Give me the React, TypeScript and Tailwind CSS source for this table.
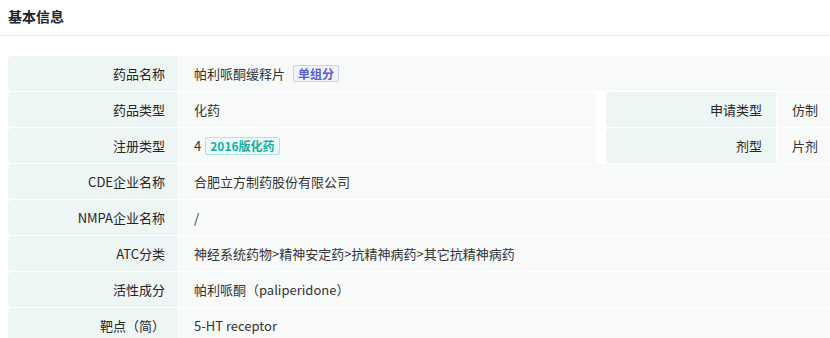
import type { ReactNode } from 'react';

type Row = { label: string; value: ReactNode; extra?: { label: string; value: string } };

const rows: Row[] = [
  {
    label: '药品名称',
    value: (
      <>
        帕利哌酮缓释片
        <span className="ml-[8px] inline-flex h-[17px] items-center rounded-[2px] border border-[#cfd0f2] bg-[#f1f1fc] px-[4px] text-[12px] font-semibold text-[#5b5fc7]">
          单组分
        </span>
      </>
    ),
  },
  { label: '药品类型', value: '化药', extra: { label: '申请类型', value: '仿制' } },
  {
    label: '注册类型',
    value: (
      <>
        4
        <span className="ml-[4px] inline-flex h-[18px] items-center rounded-[2px] border border-[#ace7e0] bg-[#ebfaf8] px-[4px] text-[12px] font-semibold text-[#16b0a1]">
          2016版化药
        </span>
      </>
    ),
    extra: { label: '剂型', value: '片剂' },
  },
  { label: 'CDE企业名称', value: '合肥立方制药股份有限公司' },
  { label: 'NMPA企业名称', value: '/' },
  { label: 'ATC分类', value: '神经系统药物>精神安定药>抗精神病药>其它抗精神病药' },
  { label: '活性成分', value: '帕利哌酮（paliperidone）' },
  { label: '靶点（简）', value: '5-HT receptor' },
];

export default function App() {
  return (
    <div
      className="h-[338px] w-[830px] overflow-hidden bg-white text-[13px] text-[#333]"
      style={{ fontFamily: '"Noto Sans CJK SC", "Noto Sans", sans-serif' }}
    >
      {/* Header */}
      <div className="flex h-[36px] items-center border-b border-[#e8e8e8] px-2 pb-[2px] text-[14px] font-bold text-[#222]">
        基本信息
      </div>

      {/* Table */}
      <div className="mt-5 flex flex-col gap-px pl-2">
        {rows.map((row) => (
          <div key={row.label} className="flex h-[35px] gap-px">
            <div className="flex w-[170px] shrink-0 items-center justify-end rounded-l-[4px] bg-[#eef5f5] pr-[13px] text-[#262626]">
              {row.label}
            </div>
            {row.extra ? (
              <>
                <div className="flex w-[417px] shrink-0 items-center bg-[#f8fafa] pl-[15px]">{row.value}</div>
                <div className="ml-[9px] flex w-[170px] shrink-0 items-center justify-end rounded-l-[4px] bg-[#eef5f5] pr-[14px] text-[#262626]">
                  {row.extra.label}
                </div>
                <div className="flex flex-1 items-center bg-[#f8fafa] pl-[15px]">{row.extra.value}</div>
              </>
            ) : (
              <div className="flex flex-1 items-center bg-[#f8fafa] pl-[15px]">{row.value}</div>
            )}
          </div>
        ))}
      </div>
    </div>
  );
}
